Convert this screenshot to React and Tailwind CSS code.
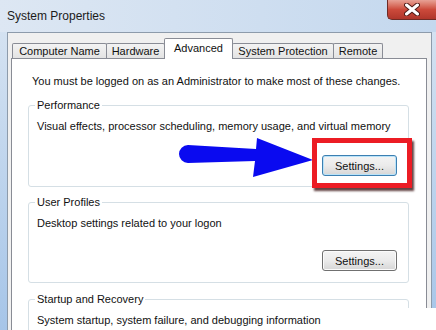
import React from "react"

const tabs = [
  { label: "Computer Name", w: "w-[95px]" },
  { label: "Hardware", w: "w-[59px]" },
  { label: "Advanced", w: "w-[69px]", active: true },
  { label: "System Protection", w: "w-[102px]" },
  { label: "Remote", w: "w-[50px]" },
]

function Tab({ label, w, active, first }) {
  if (active) {
    return (
      <div className={`${w} h-[21px] -ml-px -mb-px z-10 relative flex items-start justify-center pt-[2px] border border-b-0 border-[#898c95] bg-white rounded-t-[2px]`}>
        {label}
      </div>
    )
  }
  return (
    <div className={`${w} h-[15px] ${first ? "" : "-ml-px"} flex items-center justify-center border border-b-0 border-[#898c95] bg-gradient-to-b from-[#f3f3f3] to-[#e3e3e3] rounded-t-[2px]`}>
      {label}
    </div>
  )
}

function SettingsButton({ focused }) {
  return (
    <button
      className={`w-[75px] h-[21px] rounded-[3px] border flex items-center justify-center bg-gradient-to-b from-[#f4f4f4] via-[#ebebeb] to-[#d6d6d6] ${
        focused ? "border-[#3c7fb1] shadow-[inset_0_0_0_1px_#b9e3f9]" : "border-[#707070] shadow-[inset_0_0_0_1px_#fbfbfb]"
      }`}
    >
      Settings...
    </button>
  )
}

function GroupBox({ title, className, children }) {
  return (
    <fieldset className={`w-[381px] ml-[16px] border border-[#d5dfe5] rounded-[3px] pl-[6px] pr-[11px] ${className}`}>
      <legend className="px-[2px] leading-[14px]">{title}</legend>
      <div className="pl-[2px]">{children}</div>
    </fieldset>
  )
}

export default function App() {
  return (
    <div className="relative w-[436px] h-[330px] overflow-hidden bg-gradient-to-b from-[#d9e5f2] to-[#a6c5e8] font-['Liberation_Sans',Arial,sans-serif] text-[11px] leading-[14px] text-[#111]">
      {/* title bar */}
      <div className="h-[32px] flex items-center pl-[7px] text-[12px] text-[#1b1b1b] bg-gradient-to-r from-[#dde7f3] to-[#c4d8ee]">
        System Properties
      </div>

      <div className="flex">
        <div className="w-[7px] shrink-0" />
        <div className="w-[425px] h-[298px] border border-b-0 border-[#8d9bab] bg-[#f0f0f0] pt-[5px] pl-[3px] pr-[4px]">
          <div className="flex items-end h-[20px] pl-[1px]">
            {tabs.map((t, i) => (
              <Tab key={t.label} {...t} first={i === 0} />
            ))}
          </div>

          <div className="h-[280px] border border-[#898c95] bg-white pt-[15px]">
            <p className="pl-[20px]">You must be logged on as an Administrator to make most of these changes.</p>

            <GroupBox title="Performance" className="mt-[10px] pb-[10px]">
              <p className="mt-[7px]">Visual effects, processor scheduling, memory usage, and virtual memory</p>
              <div className="flex justify-end mt-[22px]">
                <SettingsButton focused />
              </div>
            </GroupBox>

            <GroupBox title="User Profiles" className="mt-[8px] pb-[11px]">
              <p className="mt-[7px]">Desktop settings related to your logon</p>
              <div className="flex justify-end mt-[20px]">
                <SettingsButton />
              </div>
            </GroupBox>

            <GroupBox title="Startup and Recovery" className="mt-[9px] pb-[30px]">
              <p className="mt-[7px]">System startup, system failure, and debugging information</p>
            </GroupBox>
          </div>
        </div>
      </div>

      {/* close button */}
      <div className="absolute top-0 right-0 w-[49px] h-[20px] rounded-bl-[5px] border-l border-b border-[#6e2b25] bg-gradient-to-b from-[#e7a195] via-[#cc4a3b] to-[#b0362b] flex items-center justify-center">
        <svg width="16" height="13" viewBox="0 0 16 13">
          <path d="M2.5 2 L13.5 11 M13.5 2 L2.5 11" stroke="#4e1a16" strokeWidth="5" strokeLinecap="round" />
          <path d="M2.5 2 L13.5 11 M13.5 2 L2.5 11" stroke="#ffffff" strokeWidth="3" strokeLinecap="round" />
        </svg>
      </div>

      {/* annotation: arrow */}
      <svg className="absolute left-0 top-0 pointer-events-none" width="436" height="330">
        <path d="M188 145 L256 149 L257 138 L313 160 L253 177 L255 161 L188 163 A9 9 0 0 1 188 145 Z" fill="#0a0af0" />
      </svg>

      {/* annotation: red box */}
      <div className="absolute left-[312px] top-[138px] w-[100px] h-[50px] border-[5px] border-[#ec1c24] shadow-[2px_3px_2px_rgba(60,20,20,0.8)]" />

      {/* cropped bottom edge */}
      <div className="absolute left-[400px] top-[308px] w-[36px] h-[22px] bg-white" />
    </div>
  )
}
